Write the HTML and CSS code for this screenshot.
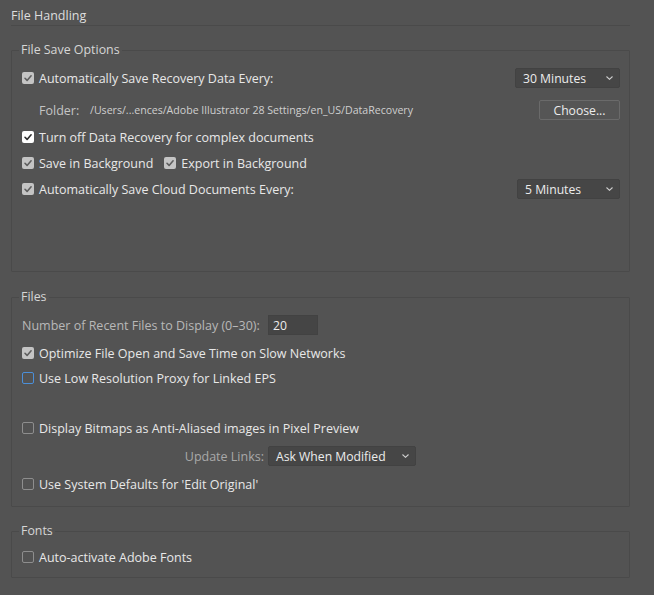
FILE: index.html
```html
<!DOCTYPE html>
<html lang="en">
<head>
<meta charset="utf-8">
<title>File Handling</title>
<link rel="stylesheet" href="styles.css">
</head>
<body>
<div class="page">
  <div class="header">File Handling</div>

  <fieldset class="group group-save">
    <legend>File Save Options</legend>
    <div class="row r-autosave">
      <span class="cb cb-on"><svg viewBox="0 0 12 12"><path d="M3 6.3 L5.1 8.4 L9.1 3.8"/></svg></span>
      <span class="lbl">Automatically Save Recovery Data Every:</span>
      <span class="select sel-30">30 Minutes<svg class="chev" viewBox="0 0 7 4"><path d="M0.5 0.5 L3.5 3.3 L6.5 0.5"/></svg></span>
    </div>
    <div class="row r-folder">
      <span class="folder-lbl">Folder:</span>
      <span class="path">/Users/...ences/Adobe Illustrator 28 Settings/en_US/DataRecovery</span>
      <span class="button">Choose...</span>
    </div>
    <div class="row r-turnoff">
      <span class="cb cb-white"><svg viewBox="0 0 12 12"><path d="M3 6.3 L5.1 8.4 L9.1 3.8"/></svg></span>
      <span class="lbl">Turn off Data Recovery for complex documents</span>
    </div>
    <div class="row r-bg">
      <span class="cb cb-on"><svg viewBox="0 0 12 12"><path d="M3 6.3 L5.1 8.4 L9.1 3.8"/></svg></span>
      <span class="lbl">Save in Background</span>
      <span class="cb cb-on cb-second"><svg viewBox="0 0 12 12"><path d="M3 6.3 L5.1 8.4 L9.1 3.8"/></svg></span>
      <span class="lbl">Export in Background</span>
    </div>
    <div class="row r-cloud">
      <span class="cb cb-on"><svg viewBox="0 0 12 12"><path d="M3 6.3 L5.1 8.4 L9.1 3.8"/></svg></span>
      <span class="lbl">Automatically Save Cloud Documents Every:</span>
      <span class="select sel-5">5 Minutes<svg class="chev" viewBox="0 0 7 4"><path d="M0.5 0.5 L3.5 3.3 L6.5 0.5"/></svg></span>
    </div>
  </fieldset>

  <fieldset class="group group-files">
    <legend>Files</legend>
    <div class="row r-recent">
      <span class="dim-lbl">Number of Recent Files to Display (0–30):</span>
      <span class="input">20</span>
    </div>
    <div class="row r-optimize">
      <span class="cb cb-on"><svg viewBox="0 0 12 12"><path d="M3 6.3 L5.1 8.4 L9.1 3.8"/></svg></span>
      <span class="lbl">Optimize File Open and Save Time on Slow Networks</span>
    </div>
    <div class="row r-lowres">
      <span class="cb cb-off cb-focus"></span>
      <span class="lbl">Use Low Resolution Proxy for Linked EPS</span>
    </div>
    <div class="row r-bitmaps">
      <span class="cb cb-off"></span>
      <span class="lbl">Display Bitmaps as Anti-Aliased images in Pixel Preview</span>
    </div>
    <div class="row r-update">
      <span class="update-lbl">Update Links:</span>
      <span class="select sel-update">Ask When Modified<svg class="chev" viewBox="0 0 7 4"><path d="M0.5 0.5 L3.5 3.3 L6.5 0.5"/></svg></span>
    </div>
    <div class="row r-system">
      <span class="cb cb-off"></span>
      <span class="lbl">Use System Defaults for 'Edit Original'</span>
    </div>
  </fieldset>

  <fieldset class="group group-fonts">
    <legend>Fonts</legend>
    <div class="row r-fonts">
      <span class="cb cb-off"></span>
      <span class="lbl">Auto-activate Adobe Fonts</span>
    </div>
  </fieldset>
</div>
</body>
</html>
```

FILE: styles.css
```css
html, body {
  margin: 0;
  padding: 0;
  background: #535353;
}

body {
  font-family: "Open Sans", "DejaVu Sans", sans-serif;
  font-size: 12.5px;
  color: #e6e6e6;
  width: 654px;
  height: 595px;
  overflow: hidden;
}

.page {
  padding-left: 11px;
}

.header {
  width: 619px;
  box-sizing: border-box;
  padding-top: 8px;
  padding-bottom: 1px;
  line-height: 16px;
  font-size: 12.5px;
  color: #dedede;
  border-bottom: 1px solid #4a4a4a;
}

.group {
  margin: 0;
  width: 619px;
  box-sizing: border-box;
  border: 1px solid #4a4a4a;
  border-radius: 1px;
  padding: 0 9px 0 10px;
  min-width: 0;
}

.group legend {
  padding: 0 2px;
  margin-left: -3px;
  line-height: 16px;
  font-size: 12.4px;
  color: #d6d6d6;
}

.group-save {
  margin-top: 16px;
  padding-top: 9px;
  padding-bottom: 71px;
}

.group-files {
  margin-top: 17px;
  padding-top: 9px;
  padding-bottom: 11px;
}

.group-fonts {
  margin-top: 16px;
  padding-top: 7px;
  padding-bottom: 9px;
}

.row {
  display: flex;
  align-items: center;
  height: 22px;
  white-space: nowrap;
}

.r-folder { margin-top: 10px; }
.r-turnoff { margin-top: 5px; }
.r-bg { margin-top: 4px; }
.r-cloud { margin-top: 4px; }

.r-optimize { margin-top: 6px; }
.r-lowres { margin-top: 3px; }
.r-bitmaps { margin-top: 28px; }
.r-update { margin-top: 6px; }
.r-system { margin-top: 6px; }

/* checkboxes */
.cb {
  width: 12px;
  height: 12px;
  box-sizing: border-box;
  border-radius: 2px;
  flex: none;
  display: flex;
  margin-right: 5px;
}

.cb svg {
  width: 12px;
  height: 12px;
  fill: none;
  stroke-width: 1.6;
  stroke-linecap: round;
  stroke-linejoin: round;
}

.cb-on {
  background: #c4c4c4;
}
.cb-on svg { stroke: #5e5e5e; }

.cb-white {
  background: #ffffff;
}
.cb-white svg { stroke: #2e2e2e; }

.cb-off {
  border: 1px solid #8e8e8e;
}

.cb-focus {
  border: 1.5px solid #4b8fd9;
}

.cb-second {
  margin-left: 11px;
}

.lbl {
  color: #e8e8e8;
}

/* selects and buttons */
.select {
  margin-left: auto;
  height: 20px;
  box-sizing: border-box;
  background: #464646;
  border: 1px solid #424242;
  border-radius: 2px;
  display: flex;
  align-items: center;
  padding: 0 6px 0 7px;
  color: #ececec;
  font-size: 12.2px;
}

.chev {
  width: 7px;
  height: 4px;
  margin-left: auto;
  fill: none;
  stroke: #cfcfcf;
  stroke-width: 1.1;
}

.sel-30 { width: 105px; }
.sel-5 { width: 103px; }
.sel-update {
  margin-left: 4px;
  width: 148px;
}

.folder-lbl {
  margin-left: 17px;
  color: #c4c4c4;
  width: 51px;
}

.path {
  font-size: 10.6px;
  color: #cfcfcf;
}

.button {
  margin-left: auto;
  width: 81px;
  height: 20px;
  box-sizing: border-box;
  border: 1px solid #6a6a6a;
  border-radius: 2px;
  background: #555555;
  display: flex;
  align-items: center;
  justify-content: center;
  color: #ececec;
  font-size: 12.2px;
}

.dim-lbl {
  color: #b8b8b8;
  width: 246px;
  flex: none;
}

.input {
  width: 50px;
  height: 20px;
  box-sizing: border-box;
  background: #454545;
  border: 1px solid #424242;
  padding-left: 4px;
  display: flex;
  align-items: center;
  color: #ececec;
  font-size: 12.2px;
}

.update-lbl {
  width: 242px;
  text-align: right;
  color: #a9a9a9;
}
```
